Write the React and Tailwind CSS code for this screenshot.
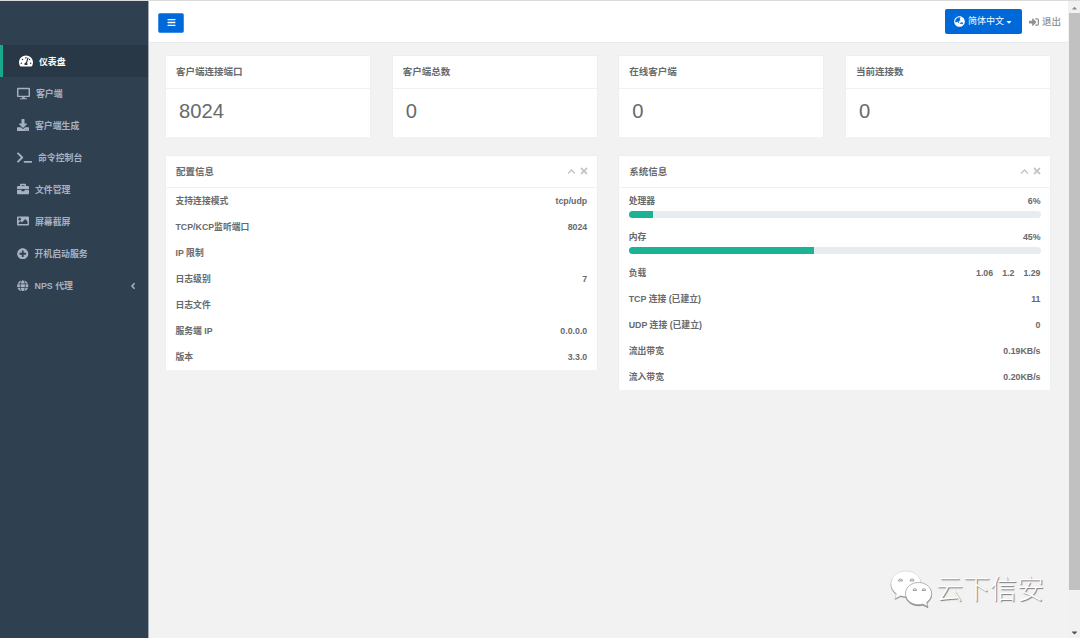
import {
  FaTachometerAlt,
  FaDesktop,
  FaDownload,
  FaTerminal,
  FaBriefcase,
  FaImage,
  FaPlusCircle,
  FaGlobe,
  FaGlobeAsia,
  FaAngleLeft,
  FaBars,
  FaCaretDown,
  FaCaretUp,
  FaSignInAlt,
  FaChevronUp,
  FaTimes,
} from 'react-icons/fa';

const menu = [
  { label: '仪表盘', icon: FaTachometerAlt, size: 14, active: true },
  { label: '客户端', icon: FaDesktop, size: 13 },
  { label: '客户端生成', icon: FaDownload, size: 12 },
  { label: '命令控制台', icon: FaTerminal, size: 15 },
  { label: '文件管理', icon: FaBriefcase, size: 12 },
  { label: '屏幕截屏', icon: FaImage, size: 12 },
  { label: '开机启动服务', icon: FaPlusCircle, size: 11.5 },
  { label: 'NPS 代理', icon: FaGlobe, size: 11.5, arrow: true },
];

const stats = [
  { label: '客户端连接端口', value: '8024' },
  { label: '客户端总数', value: '0' },
  { label: '在线客户端', value: '0' },
  { label: '当前连接数', value: '0' },
];

const config = [
  { label: '支持连接模式', value: 'tcp/udp' },
  { label: 'TCP/KCP监听端口', value: '8024' },
  { label: 'IP 限制', value: '' },
  { label: '日志级别', value: '7' },
  { label: '日志文件', value: '' },
  { label: '服务端 IP', value: '0.0.0.0' },
  { label: '版本', value: '3.3.0' },
];

const usage = [
  { label: '处理器', value: 6 },
  { label: '内存', value: 45 },
];

const system = [
  { label: 'TCP 连接 (已建立)', value: '11' },
  { label: 'UDP 连接 (已建立)', value: '0' },
  { label: '流出带宽', value: '0.19KB/s' },
  { label: '流入带宽', value: '0.20KB/s' },
];

function Sidebar() {
  return (
    <nav className="w-[148px] shrink-0 bg-[#2f4050] pt-[44px] text-[8.9px] font-bold text-[#a7b1c2]">
      {menu.map(({ label, icon: Icon, size, active, arrow }) => (
        <div
          key={label}
          className={
            active
              ? 'flex h-8 items-center gap-[6px] border-l-[3px] border-[#19aa8d] bg-[#293846] pl-4 text-white'
              : 'flex h-[32.1px] items-center gap-[6px] pl-[17px] pr-[10px]'
          }
        >
          <Icon size={size} className="shrink-0" />
          <span className="pt-[3px]">{label}</span>
          {arrow && <FaAngleLeft size={10} className="ml-auto" />}
        </div>
      ))}
    </nav>
  );
}

function TopBar() {
  return (
    <header className="flex h-[42px] shrink-0 items-center border-b border-[#e7eaec] bg-white pl-[9px] pr-[7px]">
      <button className="mt-[3px] flex h-5 w-[26px] items-center justify-center rounded-[2px] border border-[#3d8fe5] bg-[#0069d9] pb-px text-white">
        <FaBars size={9} />
      </button>
      <button className="ml-auto flex h-[25px] w-[77px] items-center justify-center rounded-[2px] bg-[#0069d9] text-[9px] text-white">
        <FaGlobeAsia size={11} className="mr-[3px]" />
        <span className="pt-px">简体中文</span>
        <FaCaretDown size={8} className="ml-px" />
      </button>
      <a className="ml-[7px] flex items-center gap-[3px] text-[9.5px] font-medium text-[#8f9294]">
        <FaSignInAlt size={10} />
        <span className="pt-px">退出</span>
      </a>
    </header>
  );
}

function Panel({ title, tools, children }) {
  return (
    <section className="border border-b-0 border-[#eceeef] bg-white">
      <div className="flex h-[32.5px] items-center border-b border-[#f0f1f2] px-[10px] text-[9.5px] font-bold">
        <span className="pt-px">{title}</span>
        {tools && (
          <span className="-mr-[2px] ml-auto flex items-center gap-[3px] text-[#c4c4c4]">
            <FaChevronUp size={9} />
            <FaTimes size={10} />
          </span>
        )}
      </div>
      {children}
    </section>
  );
}

function Row({ label, children }) {
  return (
    <div className="flex h-[26px] items-center justify-between px-[9.5px] pt-[2px]">
      <span>{label}</span>
      <span>{children}</span>
    </div>
  );
}

function Scrollbar() {
  return (
    <div className="flex w-3 shrink-0 flex-col items-center bg-[#f1f1f1]">
      <FaCaretUp size={9} className="mt-[3px] mb-px h-2 text-[#8a8a8a]" />
      <div className="h-[577px] w-[11px] bg-[#c1c1c1]" />
      <FaCaretDown size={9} className="mt-auto mb-px text-[#505050]" />
    </div>
  );
}

function Watermark() {
  return (
    <div className="absolute left-[889px] top-[567px] flex items-center gap-[3px]">
      <svg width="44" height="42" viewBox="0 0 44 42" className="drop-shadow-[0.5px_1px_0.5px_#888]">
        <path
          d="M17 3C8.500 3 2 8.600 2 15.800c0 4.100 2.200 7.500 5.500 9.900L6 30.500l5.500-2.800c1.800.5 3.500.8 5.500.8 8.500 0 15-5.700 15-12.700S25.500 3 17 3z"
          fill="#fff"
          stroke="#c8c8c8"
          strokeWidth="0.5"
        />
        <path
          d="M29.500 14.500c-7.500 0-13 4.900-13 11.100s5.500 11.100 13 11.100c1.600 0 3-.2 4.400-.6l5 2.600-1.300-4.200c3-2.100 5-5.200 5-8.900 0-6.200-5.800-11.100-13.100-11.100z"
          fill="#fff"
          stroke="#a0a0a0"
          strokeWidth="0.8"
        />
        <g fill="#eee" stroke="#999" strokeWidth="0.9">
          <path d="M9.500 13a2 2 0 1 1 4 0z" />
          <path d="M21 13a2 2 0 1 1 4 0z" />
          <path d="M24 22.500a1.800 1.800 0 1 1 3.600 0z" />
          <path d="M33 22.500a1.800 1.800 0 1 1 3.600 0z" />
        </g>
      </svg>
      <span className="pt-[3px] text-[27px] leading-none font-light text-white [text-shadow:1px_1px_1px_#777]">云下信安</span>
    </div>
  );
}

export default function App() {
  return (
    <div className="relative flex h-[638px] w-[1080px] overflow-hidden border-t border-[#d9dbdc] bg-[#f2f2f2] font-['Liberation_Sans','Noto_Sans_CJK_SC',sans-serif] text-[#676a6c]">
      <Sidebar />
      <div className="flex min-w-0 flex-1 flex-col border-l border-[#a3abb3]">
        <TopBar />
        <main className="flex flex-col gap-[17.5px] pl-[16px] pr-[17px] pt-[12px]">
          <div className="grid grid-cols-4 gap-[20.5px]">
            {stats.map((s) => (
              <Panel key={s.label} title={s.label}>
                <div className="flex h-[48.5px] items-center pb-[4px] pl-[13px] text-[20.2px]">{s.value}</div>
              </Panel>
            ))}
          </div>
          <div className="grid grid-cols-2 items-start gap-[20.5px] text-[8.8px] font-bold">
            <Panel title="配置信息" tools>
              {config.map((c) => (
                <Row key={c.label} label={c.label}>{c.value}</Row>
              ))}
            </Panel>
            <Panel title="系统信息" tools>
              {usage.map((u) => (
                <div key={u.label} className="h-[36px] px-[9.5px] pt-[7px]">
                  <div className="flex h-[14px] items-center justify-between">
                    <span>{u.label}</span>
                    <span>{u.value}%</span>
                  </div>
                  <div className="mt-[2px] h-[7px] overflow-hidden rounded-full bg-[#e9ecef]">
                    <div className="h-full bg-[#1ab394]" style={{ width: `${u.value}%` }} />
                  </div>
                </div>
              ))}
              <Row label="负载">
                <span className="flex gap-[9px]">
                  <span>1.06</span>
                  <span>1.2</span>
                  <span>1.29</span>
                </span>
              </Row>
              {system.map((s) => (
                <Row key={s.label} label={s.label}>{s.value}</Row>
              ))}
            </Panel>
          </div>
        </main>
      </div>
      <Scrollbar />
      <Watermark />
    </div>
  );
}
